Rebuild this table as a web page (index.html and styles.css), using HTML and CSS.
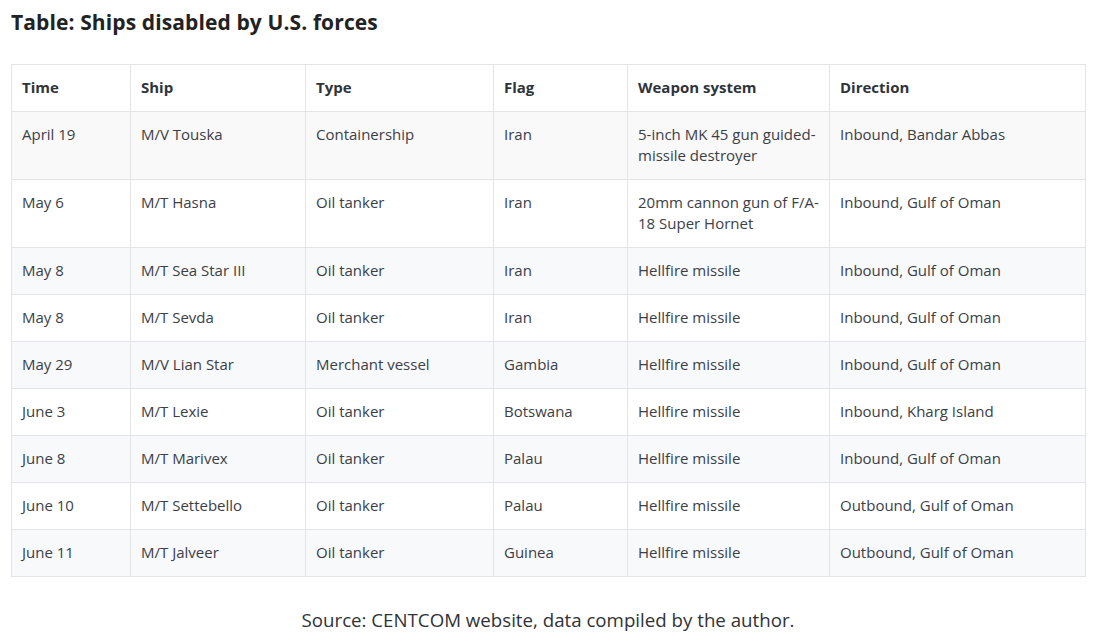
FILE: index.html
```html
<!DOCTYPE html>
<html lang="en">
<head>
<meta charset="utf-8">
<title>Ships disabled by U.S. forces</title>
<link rel="stylesheet" href="styles.css">
</head>
<body>
<main class="page">
  <h2 class="title">Table: Ships disabled by U.S. forces</h2>
  <table class="ships">
    <colgroup>
      <col class="c-time"><col class="c-ship"><col class="c-type"><col class="c-flag"><col class="c-weapon"><col class="c-dir">
    </colgroup>
    <thead>
      <tr><th>Time</th><th>Ship</th><th>Type</th><th>Flag</th><th>Weapon system</th><th>Direction</th></tr>
    </thead>
    <tbody>
      <tr class="first"><td>April 19</td><td>M/V Touska</td><td>Containership</td><td>Iran</td><td>5-inch MK 45 gun guided-missile destroyer</td><td>Inbound, Bandar Abbas</td></tr>
      <tr><td>May 6</td><td>M/T Hasna</td><td>Oil tanker</td><td>Iran</td><td>20mm cannon gun of F/A-18 Super Hornet</td><td>Inbound, Gulf of Oman</td></tr>
      <tr class="alt"><td>May 8</td><td>M/T Sea Star III</td><td>Oil tanker</td><td>Iran</td><td>Hellfire missile</td><td>Inbound, Gulf of Oman</td></tr>
      <tr><td>May 8</td><td>M/T Sevda</td><td>Oil tanker</td><td>Iran</td><td>Hellfire missile</td><td>Inbound, Gulf of Oman</td></tr>
      <tr class="alt"><td>May 29</td><td>M/V Lian Star</td><td>Merchant vessel</td><td>Gambia</td><td>Hellfire missile</td><td>Inbound, Gulf of Oman</td></tr>
      <tr><td>June 3</td><td>M/T Lexie</td><td>Oil tanker</td><td>Botswana</td><td>Hellfire missile</td><td>Inbound, Kharg Island</td></tr>
      <tr class="alt"><td>June 8</td><td>M/T Marivex</td><td>Oil tanker</td><td>Palau</td><td>Hellfire missile</td><td>Inbound, Gulf of Oman</td></tr>
      <tr><td>June 10</td><td>M/T Settebello</td><td>Oil tanker</td><td>Palau</td><td>Hellfire missile</td><td>Outbound, Gulf of Oman</td></tr>
      <tr class="alt"><td>June 11</td><td>M/T Jalveer</td><td>Oil tanker</td><td>Guinea</td><td>Hellfire missile</td><td>Outbound, Gulf of Oman</td></tr>
    </tbody>
  </table>
  <p class="source">Source: CENTCOM website, data compiled by the author.</p>
</main>
</body>
</html>
```

FILE: styles.css
```css
html, body {
  margin: 0;
  padding: 0;
  background: #ffffff;
}

body {
  font-family: "Open Sans", "Noto Sans", sans-serif;
  color: #3b4047;
}

.page {
  padding: 9px 20px 0 11px;
}

.title {
  margin: 0 0 28px 0;
  font-size: 21px;
  line-height: 27px;
  font-weight: 700;
  letter-spacing: 0.11px;
  color: #222222;
}

.ships {
  width: 1074px;
  border-collapse: collapse;
  table-layout: fixed;
  font-size: 15px;
  line-height: 21px;
}

.c-time { width: 119px; }
.c-ship { width: 175px; }
.c-type { width: 188px; }
.c-flag { width: 134px; }
.c-weapon { width: 202px; }
.c-dir { width: 256px; }

.ships th,
.ships td {
  border: 1px solid #e4e4e6;
  padding: 12px 9px 13px 10px;
  text-align: left;
  vertical-align: top;
}

.ships th {
  font-weight: 700;
  color: #2f343b;
}

.ships tr.first td {
  background: #f9f9f9;
}

.ships tr.alt td {
  background: #f8f9fb;
}

.source {
  margin: 30px 0 0 0;
  text-align: center;
  font-size: 18.7px;
  line-height: 26px;
  color: #2f3338;
}
```
